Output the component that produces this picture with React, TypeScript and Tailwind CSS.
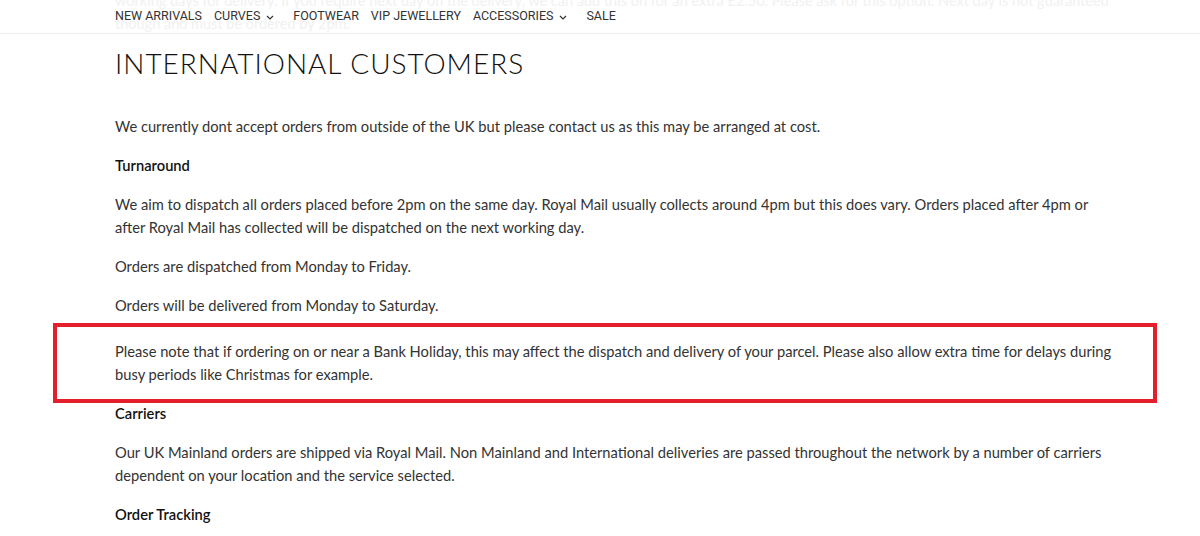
import React from "react";

const body = { fontFamily: "Lato, 'Noto Sans', sans-serif" };

function Chevron() {
  return (
    <svg width="8" height="5" viewBox="0 0 8 5" className="ml-[6px] mt-[2px]" fill="none">
      <path d="M1 1l3 3 3-3" stroke="#333" strokeWidth="1.2" />
    </svg>
  );
}

export default function App() {
  const navItems: { label: string; chev?: boolean }[] = [
    { label: "NEW ARRIVALS" },
    { label: "CURVES", chev: true },
    { label: "FOOTWEAR" },
    { label: "VIP JEWELLERY" },
    { label: "ACCESSORIES", chev: true },
    { label: "SALE" },
  ];
  return (
    <div className="relative w-[1200px] h-[536px] overflow-hidden bg-white" style={body}>
      <header className="relative h-[34px] border-b border-[#ececec]">
        <div className="absolute left-[115px] top-[-11px] text-[14.5px] leading-[23px] text-[#f1f1f1] whitespace-nowrap">
          working days for delivery. If you require next day on the delivery, we can add this on for an extra £2.50. Please ask for this option. Next day is not guaranteed
          <br />
          though and must be ordered by 2pm.
        </div>
        <nav className="relative flex items-center h-[32px] pl-[115px] gap-[12px] text-[12.5px] text-[#333]" style={{ fontFamily: "Roboto, sans-serif" }}>
          {navItems.map((n) => (
            <span key={n.label} className={`flex items-center ${n.chev ? "mr-[7px]" : ""}`}>
              {n.label}
              {n.chev && <Chevron />}
            </span>
          ))}
        </nav>
      </header>
      <main className="pl-[115px] w-[1160px]">
        <h1 className="mt-[14px] text-[28px] leading-[30px] tracking-[0.035em] text-[#111] font-light">INTERNATIONAL CUSTOMERS</h1>
        <div className="mt-[37px] text-[14.7px] leading-[23px] text-[#333] flex flex-col gap-[16px]">
          <p>We currently dont accept orders from outside of the UK but please contact us as this may be arranged at cost.</p>
          <p className="font-semibold text-[#111]">Turnaround</p>
          <p>
            We aim to dispatch all orders placed before 2pm on the same day. Royal Mail usually collects around 4pm but this does vary. Orders placed after 4pm or
            <br />
            after Royal Mail has collected will be dispatched on the next working day.
          </p>
          <p>Orders are dispatched from Monday to Friday.</p>
          <p>Orders will be delivered from Monday to Saturday.</p>
          <p className="mt-[7px]">
            Please note that if ordering on or near a Bank Holiday, this may affect the dispatch and delivery of your parcel. Please also allow extra time for delays during
            <br />
            busy periods like Christmas for example.
          </p>
          <p className="font-semibold text-[#111]">Carriers</p>
          <p>
            Our UK Mainland orders are shipped via Royal Mail. Non Mainland and International deliveries are passed throughout the network by a number of carriers
            <br />
            dependent on your location and the service selected.
          </p>
          <p className="font-semibold text-[#111]">Order Tracking</p>
        </div>
      </main>
      <div className="absolute left-[53px] top-[323px] w-[1104px] h-[80px] border-[4px] border-[#e41f2b] pointer-events-none" />
    </div>
  );
}
